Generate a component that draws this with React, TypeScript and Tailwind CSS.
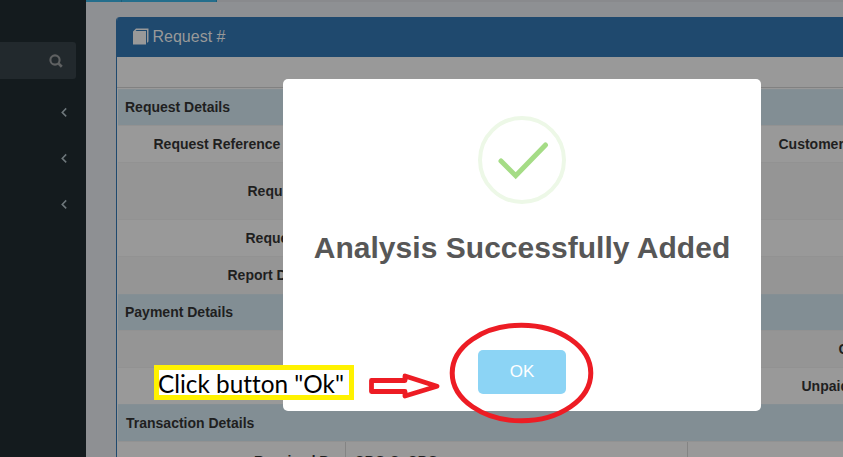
import React from 'react';

type RowProps = { tone: string; height: string; left?: string; leftPad?: string; right?: string; rightPad?: string };

function Row({ tone, height, left, leftPad = '', right, rightPad = '' }: RowProps) {
  return (
    <div className={`flex shrink-0 items-center whitespace-nowrap border-t border-[#929292] ${tone} ${height}`}>
      <div className={`w-[569px] shrink-0 overflow-hidden ${leftPad}`}>{left}</div>
      <div className={`grow overflow-hidden ${rightPad}`}>{right}</div>
    </div>
  );
}

function Section({ title, height, pad = 'pl-[7px]' }: { title: string; height: string; pad?: string }) {
  return <div className={`flex shrink-0 items-center border-t border-[#858f94] bg-[#828e94] ${height} ${pad}`}>{title}</div>;
}

function Chevron() {
  return (
    <svg width="6" height="10" viewBox="0 0 6 10" fill="none" stroke="#6e777b" strokeWidth="1.5">
      <path d="M5.2 1.4 1.2 5.4 5.2 9.4" />
    </svg>
  );
}

function Sidebar() {
  return (
    <aside className="flex w-[86px] shrink-0 flex-col bg-[#141b1e] pt-[42px]">
      <div className="flex h-[37px] w-[76px] items-center justify-end rounded-r-[3px] bg-[#22292d] pr-[13px]">
        <svg width="14" height="14" viewBox="0 0 14 14" fill="none" stroke="#5f6162" strokeWidth="2.1">
          <circle cx="6" cy="6" r="4.6" />
          <path d="m9.4 9.4 3.4 3.4" strokeWidth="2.7" />
        </svg>
      </div>
      <nav className="flex flex-col items-end gap-9 pr-[19px] pt-[28px]">
        <Chevron />
        <Chevron />
        <Chevron />
      </nav>
    </aside>
  );
}

function Dialog() {
  return (
    <div className="absolute left-[283px] top-[79px] flex h-[332px] w-[478px] flex-col items-center rounded-[5px] bg-white pt-[37px]">
      <svg width="88" height="88" viewBox="0 0 88 88" fill="none">
        <circle cx="44" cy="44" r="42" stroke="#edf8e7" strokeWidth="4" />
        <path d="M23 45 37.7 59.8 67.5 29" stroke="#a5dc86" strokeWidth="5" strokeLinecap="round" />
      </svg>
      <h2 className="mt-[24px] whitespace-nowrap text-[30px] font-bold leading-[40px] tracking-[0.03px] text-[#575757]">Analysis Successfully Added</h2>
      <button className="mt-[82px] h-[44px] w-[88px] rounded-[5px] bg-[#8cd4f5] text-[17px] text-white">OK</button>
    </div>
  );
}

function Annotations() {
  return (
    <>
      <div className="absolute left-[154px] top-[365px] flex h-[35px] w-[200px] items-center border-[5px] border-[#fff200] bg-white">
        <svg width="190" height="25" className="overflow-visible">
          <text x="-1" y="22.5" textLength="186" lengthAdjust="spacingAndGlyphs" fill="#000" className="font-['Lato',sans-serif] text-[25px] [font-variant-ligatures:none]">Click button "Ok"</text>
        </svg>
      </div>
      <svg className="absolute left-0 top-0" width="843" height="457" fill="none" stroke="#ed1c24">
        <path d="M371.5 380.5H405V376L437 386.3 405 396V391.5H371.5Z" strokeWidth="4.8" strokeLinejoin="round" />
        <ellipse cx="521.5" cy="373" rx="69.3" ry="47.8" strokeWidth="5" />
      </svg>
    </>
  );
}

export default function App() {
  return (
    <div className="relative flex h-[457px] w-[843px] overflow-hidden bg-[#8e9093] font-['Liberation_Sans',Arial,sans-serif]">
      <Sidebar />
      <main className="flex min-w-0 grow flex-col">
        <div className="flex h-[2px] shrink-0 bg-[#898a8d]">
          <div className="w-[36px] border-r border-[#1b5e79] bg-[#246e8c]" />
          <div className="w-[95px] border-r border-[#1b5e79] bg-[#246e8c]" />
        </div>
        <section className="ml-[30px] mt-[15px] flex h-[440px] flex-col overflow-hidden rounded-tl-[4px] border-l border-[#1f496e] bg-[#999]">
          <header className="flex h-[40px] shrink-0 items-center bg-[#1f496e] pl-[16px] text-[16px] text-[#999]">
            <svg width="16" height="17" viewBox="0 0 16 17" className="mb-[2px] mr-[3.5px]">
              <path d="M0 3.5 3 .5h12.5v13L14 15V2H3.5L2.5 3H13v13.5H0Z" fill="#999" />
            </svg>
            Request #
          </header>
          <div className="h-[30px] shrink-0" />
          <div className="flex grow flex-col border-t border-[#818181] pl-px pt-px text-[14px] font-bold leading-5 text-[#1f1f1f]">
            <Section title="Request Details" height="h-[36px] pb-[2px]" />
            <Row tone="bg-[#999]" height="h-[37px]" left="Request Reference" leftPad="pl-[35.5px]" right="Customer" rightPad="pl-[91.5px]" />
            <Row tone="bg-[#959595]" height="h-[57px]" left="Requ" leftPad="pl-[129.5px]" />
            <Row tone="bg-[#999]" height="h-[37px]" left="Reque" leftPad="pl-[127.5px]" />
            <Row tone="bg-[#959595]" height="h-[38px] pb-[2px]" left="Report D" leftPad="pl-[109.5px]" />
            <Section title="Payment Details" height="h-[36px] pb-[2px]" />
            <Row tone="bg-[#959595]" height="h-[37px]" right="C" rightPad="pl-[151.5px]" />
            <Row tone="bg-[#999]" height="h-[37px]" right="Unpaid" rightPad="pl-[114.5px]" />
            <Section title="Transaction Details" height="h-[37px]" pad="pl-[8px]" />
            <div className="flex h-[38px] shrink-0 border-t border-[#929292] bg-[#999]">
              <div className="w-[228px] border-r border-[#848484] pl-[136px] pt-[9px]">Received By</div>
              <div className="w-[342px] border-r border-[#848484] pl-[8.5px] pt-[9px] font-normal">CRO C. CRO</div>
            </div>
          </div>
        </section>
      </main>
      <Dialog />
      <Annotations />
    </div>
  );
}
